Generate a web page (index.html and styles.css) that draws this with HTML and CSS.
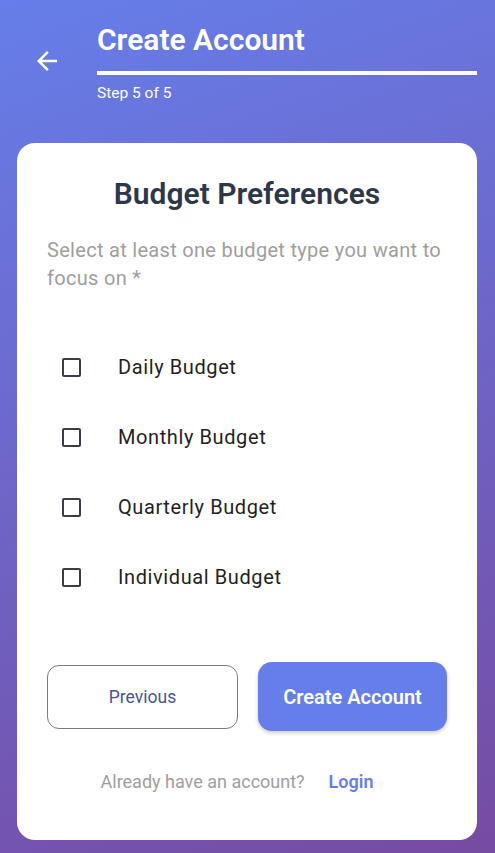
FILE: index.html
```html
<!DOCTYPE html>
<html>
<head>
<meta charset="utf-8">
<link rel="stylesheet" href="styles.css">
</head>
<body>
<div class="screen">
  <header class="header">
    <button class="back" aria-label="Back">
      <svg width="30" height="30" viewBox="0 0 24 24"><path d="M20 11H7.83l5.59-5.59L12 4l-8 8 8 8 1.41-1.41L7.83 13H20v-2z" fill="#fff"/></svg>
    </button>
    <div class="head-main">
      <h1 class="title">Create Account</h1>
      <div class="progress"><div class="progress-fill" style="width:100%"></div></div>
      <div class="step">Step 5 of 5</div>
    </div>
  </header>
  <main class="card">
    <h2 class="card-title">Budget Preferences</h2>
    <p class="subtitle">Select at least one budget type you want to focus on *</p>
    <ul class="options">
      <li class="option"><span class="box"></span><span class="label">Daily Budget</span></li>
      <li class="option"><span class="box"></span><span class="label">Monthly Budget</span></li>
      <li class="option"><span class="box"></span><span class="label">Quarterly Budget</span></li>
      <li class="option"><span class="box"></span><span class="label">Individual Budget</span></li>
    </ul>
    <div class="actions">
      <button class="btn btn-outline">Previous</button>
      <button class="btn btn-primary">Create Account</button>
    </div>
    <div class="footer">
      <span class="muted">Already have an account?</span>
      <a class="login">Login</a>
    </div>
  </main>
</div>
</body>
</html>
```
FILE: styles.css
```css
* { box-sizing: border-box; }
html, body { margin: 0; padding: 0; height: 100%; }
body {
  font-family: Roboto, "Noto Sans", sans-serif;
  background: linear-gradient(160deg, #667eea 0%, #764ba2 100%);
  min-height: 853px;
}
.screen { padding: 0 18px 13px 17px; }
.header {
  display: flex;
  align-items: flex-start;
  padding-top: 21px;
  height: 143px;
}
.back {
  background: none;
  border: none;
  padding: 0;
  width: 30px;
  height: 30px;
  margin: 25px 0 0 15px;
  cursor: pointer;
}
.head-main { flex: 1; margin-left: 35px; }
.title {
  margin: 0;
  color: #fff;
  font-size: 30px;
  font-weight: 600;
  line-height: 38px;
}
.progress {
  margin-top: 12px;
  height: 4px;
  background: rgba(255,255,255,0.3);
}
.progress-fill { height: 100%; background: #fff; }
.step {
  margin-top: 8px;
  color: #fff;
  font-size: 15.5px;
  line-height: 20px;
}
.card {
  background: #fff;
  border-radius: 18px;
  padding: 30px 30px 46px;
  height: 697px;
}
.card-title {
  margin: 0;
  text-align: center;
  color: #2d3748;
  font-size: 30px;
  font-weight: 600;
  line-height: 40px;
  padding-top: 1px;
}
.subtitle {
  margin: 22px 0 0;
  color: #9e9e9e;
  font-size: 20px;
  line-height: 28px;
  letter-spacing: 0.3px;
}
.options { list-style: none; margin: 40px 0 0; padding: 0; }
.option {
  display: flex;
  align-items: center;
  height: 70px;
}
.box {
  width: 19px;
  height: 19px;
  border: 2px solid #3c3c46;
  border-radius: 2px;
  margin-left: 15px;
}
.label {
  margin-left: 37px;
  color: #1f1f24;
  font-size: 20px;
  letter-spacing: 0.6px;
}
.actions {
  display: flex;
  gap: 20px;
  margin-top: 50px;
  align-items: center;
}
.btn {
  flex: 1;
  font-family: Roboto, "Noto Sans", sans-serif;
  cursor: pointer;
}
.btn-outline {
  height: 64px;
  background: #fff;
  border: 1px solid #7a7a80;
  border-radius: 12px;
  color: #4a5592;
  font-size: 17.5px;
}
.btn-primary {
  height: 69px;
  background: #667eea;
  border: none;
  border-radius: 14px;
  color: #fff;
  font-size: 20px;
  font-weight: 600;
  box-shadow: 0 2px 4px rgba(0,0,0,0.2);
}
.footer {
  margin-top: 40px;
  display: flex;
  justify-content: center;
  gap: 24px;
  font-size: 18px;
}
.muted { color: #9e9e9e; }
.login { color: #667eea; font-weight: 600; padding-right: 20px; }
```
